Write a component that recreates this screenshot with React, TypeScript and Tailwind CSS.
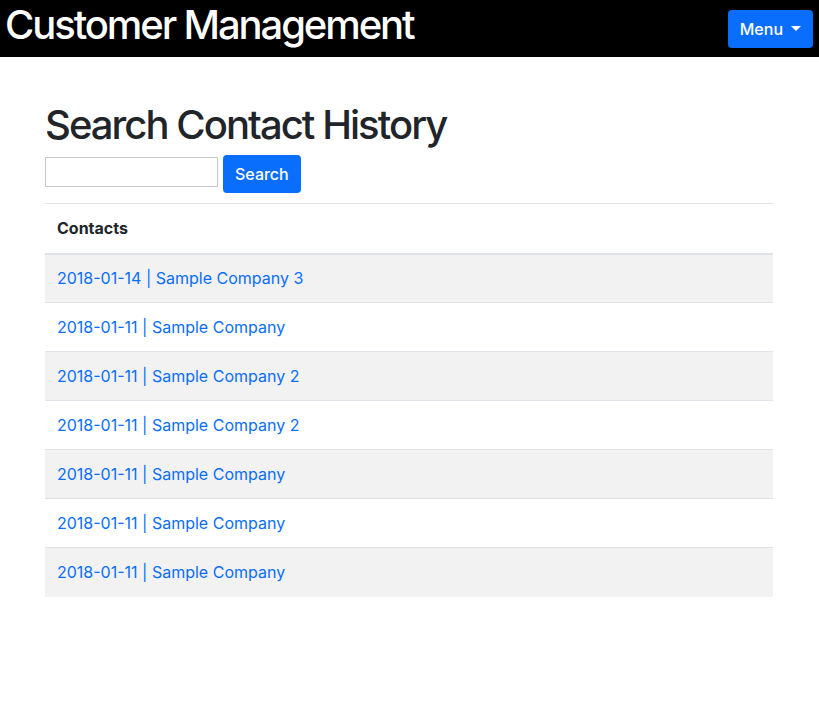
const contacts = [
  { date: '2018-01-14', company: 'Sample Company 3' },
  { date: '2018-01-11', company: 'Sample Company' },
  { date: '2018-01-11', company: 'Sample Company 2' },
  { date: '2018-01-11', company: 'Sample Company 2' },
  { date: '2018-01-11', company: 'Sample Company' },
  { date: '2018-01-11', company: 'Sample Company' },
  { date: '2018-01-11', company: 'Sample Company' },
];

export default function App() {
  return (
    <div className="min-h-[710px] bg-white font-['Inter','Liberation_Sans',sans-serif] text-[#212529]">
      <header className="flex h-[57px] items-center justify-between bg-black pl-[5px] pr-[6px]">
        <h1 className="-mt-[8px] text-[40px] font-medium leading-[48px] tracking-[-2.1px] text-white">
          Customer Management
        </h1>
        <button className="flex h-[38px] items-center gap-[8px] rounded-[4px] bg-[#0a6efd] px-[12px] text-[16px] font-medium text-white">
          Menu
          <span className="block h-0 w-0 border-x-[5px] border-t-[5px] border-x-transparent border-t-white" />
        </button>
      </header>

      <main className="mx-[45px] w-[728px] pt-[44px]">
        <h2 className="text-[40px] font-medium leading-[48px] tracking-[-1.95px]">Search Contact History</h2>
        <div className="mt-[6px] flex items-start gap-[5px]">
          <input className="mt-[2px] h-[30px] w-[173px] border border-[#c8c8c8] bg-white px-1 text-[16px] outline-none" />
          <button className="h-[38px] rounded-[4px] bg-[#0a6efd] px-[12px] text-[16px] font-medium text-white">
            Search
          </button>
        </div>

        <table className="mt-[10px] w-full border-collapse text-[16px]">
          <thead>
            <tr className="border-t border-b-2 border-t-[#dee2e6] border-b-[#dee2e6]">
              <th className="h-[50px] px-[12px] text-left font-bold">Contacts</th>
            </tr>
          </thead>
          <tbody>
            {contacts.map((c, i) => (
              <tr
                key={i}
                className={`${i > 0 ? 'border-t border-[#dee2e6]' : ''} ${i % 2 === 0 ? 'bg-[#f2f2f2]' : 'bg-white'}`}
              >
                <td className="h-[49px] px-[12px]">
                  <a href="#" className="text-[#0a6efd]">
                    {c.date} | {c.company}
                  </a>
                </td>
              </tr>
            ))}
          </tbody>
        </table>
      </main>
    </div>
  );
}
